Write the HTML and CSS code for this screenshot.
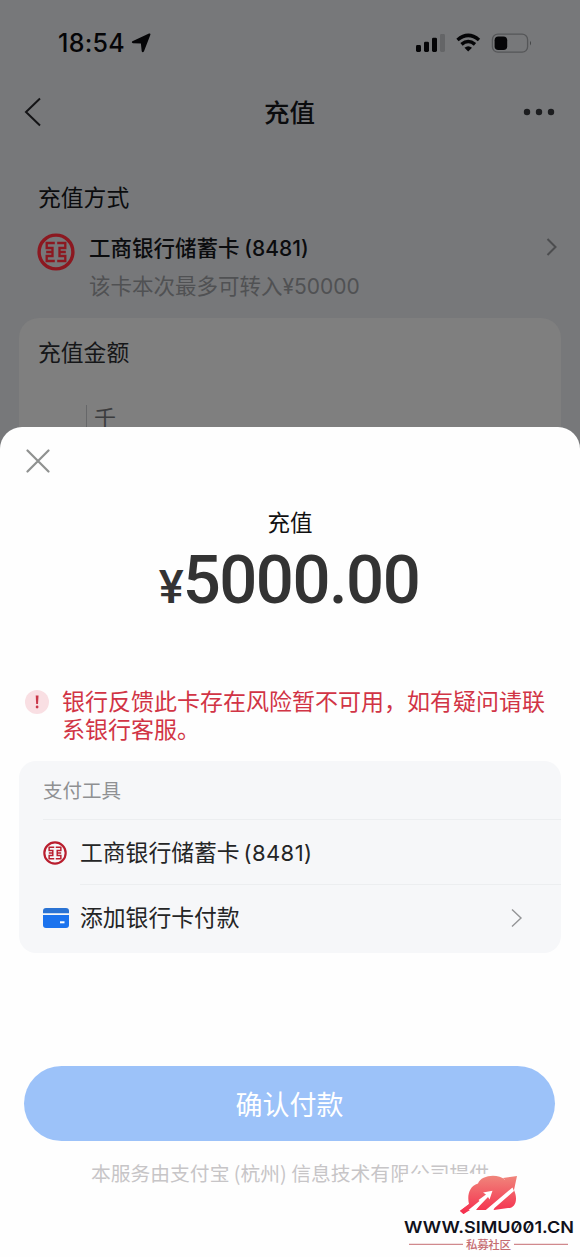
FILE: index.html
```html
<!DOCTYPE html>
<html lang="zh-CN">
<head>
<meta charset="utf-8">
<title>充值</title>
<link rel="stylesheet" href="styles.css">
</head>
<body>
<svg width="0" height="0" class="defs">
  <symbol id="icbc" viewBox="0 0 38 38">
    <circle cx="19" cy="19" r="16.9" fill="none" stroke="currentColor" stroke-width="3.4"/>
    <path d="M17.800 10H9.700V15H15.500V19H9.200M17.800 28H9.700V23H15.500V19M20.200 10H28.300V15H22.500V19H28.800M20.200 28H28.300V23H22.500V19" fill="none" stroke="currentColor" stroke-width="2.300"/>
  </symbol>
</svg>
<div class="screen">
  <div class="page">
    <div class="status">
      <span class="time">18:54</span>
      <svg class="loc" width="20" height="20" viewBox="0 0 20 20"><path d="M1.400 8.200 18 .6q1.900-.6 1.300 1.300L13 18.300q-1.300 2-2.300 0L9.900 10.600 2 10.300q-2-.8-.6-2.100z"/></svg>
      <svg class="sig" width="116" height="20" viewBox="0 0 116 20">
        <rect x="0" y="12" width="5" height="7" rx="1.4"/><rect x="8" y="8.7" width="5" height="10.3" rx="1.4"/><rect x="16" y="4.7" width="5" height="14.3" rx="1.4"/><rect x="24" y="1" width="5" height="18" rx="1.4" fill="#646567"/>
        <path d="M41.500 7Q52.200 -2.200 63 7M45.500 11.300Q52.200 5.600 59 11.300" fill="none" stroke="#050507" stroke-width="3.500"/>
        <path d="M48.500 14.700Q52.200 11.700 56 14.700L52.200 18.500z"/>
        <rect x="76.400" y="1.200" width="35.200" height="18" rx="5.500" fill="none" stroke="#555658" stroke-width="1.300"/><rect x="78.600" y="3.400" width="12.600" height="13.600" rx="3.800"/><path d="M114 7.800q2 2.200 0 4.800z" fill="#414244"/>
      </svg>
    </div>
    <div class="nav">
      <svg width="18" height="30" viewBox="0 0 18 30"><path d="M16 1.500 2 15 16 28.500" fill="none" stroke="#141416" stroke-width="2"/></svg>
      <h1>充值</h1>
      <svg width="32" height="8" viewBox="0 0 32 8"><g fill="#1c1d1f"><circle cx="4" cy="4" r="3.200"/><circle cx="16" cy="4" r="3.200"/><circle cx="28" cy="4" r="3.200"/></g></svg>
    </div>
    <div class="method">
      <h2>充值方式</h2>
      <div class="bank">
        <svg class="logo" width="38" height="38"><use href="#icbc"/></svg>
        <div class="bank-text"><p class="bank-name">工商银行储蓄卡 <span>(8481)</span></p><p class="limit">该卡本次最多可转入<span>¥50000</span></p></div>
        <svg class="more" width="12" height="18" viewBox="0 0 12 18"><path d="M1.500 1 9.500 9 1.500 17" fill="none" stroke="#4c4d4f" stroke-width="2"/></svg>
      </div>
    </div>
    <div class="amount-card"><h2>充值金额</h2><div class="unit">千</div></div>
  </div>

  <div class="sheet">
    <svg class="close" width="24" height="24" viewBox="0 0 24 24"><path d="M1.500 1.500 22.500 22.500M22.500 1.500 1.500 22.500" stroke="#8f9190" stroke-width="2.200" stroke-linecap="round"/></svg>
    <p class="title">充值</p>
    <p class="sum"><span class="yen">¥</span>5000.00</p>
    <div class="warning"><span class="mark"><svg width="24" height="24" viewBox="0 0 24 24"><path d="M10.700 5.500h2.800l-.5 8.500h-1.800z"/><circle cx="12.100" cy="17" r="1.400"/></svg></span><p>银行反馈此卡存在风险暂不可用，如有疑问请联<br>系银行客服。</p></div>
    <div class="tools">
      <div class="tools-head">支付工具</div>
      <div class="tool"><svg class="red" width="24" height="24"><use href="#icbc"/></svg><p>工商银行储蓄卡<span>(8481)</span></p></div>
      <div class="tool add">
        <svg width="26" height="20" viewBox="0 0 26 20"><path d="M0 5.200V3q0-3 3-3h20q3 0 3 3v2.200z" fill="#2a73d3"/><path d="M0 7h26v10q0 3-3 3H3q-3 0-3-3z" fill="#1b73ee"/><rect x="17" y="13.300" width="4.500" height="2" fill="#fff"/></svg>
        <p>添加银行卡付款</p>
        <svg class="go" width="12" height="20" viewBox="0 0 12 20"><path d="M1 1.500 10 10 1 18.500" fill="none" stroke="#939496" stroke-width="1.400"/></svg>
      </div>
    </div>
    <button class="pay">确认付款</button>
    <p class="provider">本服务由支付宝 (杭州) 信息技术有限公司提供</p>
  </div>

  <div class="watermark">
    <svg width="177" height="83" viewBox="403 1174 177 83">
      <defs><linearGradient id="cloud" gradientUnits="userSpaceOnUse" x1="0" y1="1176" x2="0" y2="1212"><stop offset="0" stop-color="#f0857b"/><stop offset="1" stop-color="#f5314f"/></linearGradient></defs>
      <path d="M469 1204C467 1196 469 1186 478 1183.500C481 1175 498 1173 505 1180L503 1178 517 1176 514 1190C518 1199 516 1208 508 1208L494 1210H476L480 1204 463.500 1214 460 1211z" fill="url(#cloud)"/>
      <path d="M471 1205.500 486 1194.500 483 1192.500 492.500 1190.800 489.500 1199.500 488 1197 475.500 1210H468z" fill="#fff"/>
      <path d="M460 1210.800 477 1198.500 479.500 1201 463.500 1214z" fill="url(#cloud)"/>
      <path d="M485.500 1210.200 512.500 1187.500 514 1191 494.500 1208 493 1211H485z" fill="#fff"/>
      <text x="404" y="1233.200" textLength="170" lengthAdjust="spacingAndGlyphs" class="site">WWW.SIMU<tspan class="slashed">00</tspan>1.CN</text>
      <path d="M409 1244.300H463M514 1244.300H568" stroke="#c56c71"/>
      <text x="466" y="1249" textLength="45" class="community">私募社区</text>
    </svg>
  </div>
</div>
</body>
</html>
```
FILE: styles.css
```css
* { box-sizing: border-box; }
body { margin: 0; font-family: "Noto Sans CJK SC", sans-serif; }
h1, h2, p { margin: 0; font-weight: 400; }
.defs { display: block; position: absolute; }
.screen { position: relative; width: 580px; height: 1257px; overflow: hidden; background: #77787a; }
.page { height: 460px; overflow: hidden; color: #0b0c0e; }
.status { display: flex; align-items: center; height: 86px; padding: 0 48px 0 58px; fill: #050507; }
.time { font: 500 25px/28px Inter, sans-serif; letter-spacing: .3px; width: 73px; color: #050507; }
.sig { margin-left: auto; }
.nav { display: flex; align-items: center; justify-content: space-between; height: 52px; padding: 0 25px 0 24px; }
.nav h1 { font-size: 25.500px; font-weight: 500; line-height: 48px; margin: -2px 0 0 14px; }
.method { padding: 42px 22px 0 38px; height: 180px; }
h2 { font-size: 22.800px; line-height: 34px; }
.bank { display: flex; margin-top: 18px; }
.logo { color: #8c1820; margin: 1px 0 0 -1px; }
.bank-text { margin-left: 14px; }
.bank-name { font-size: 21.500px; line-height: 32px; font-weight: 500; margin-top: -1px; }
.bank-name span { font: 500 21px/30px Inter, sans-serif; }
.limit { font-size: 21.500px; line-height: 32px; margin-top: 5px; color: #505153; }
.limit span { font: 400 21px/30px Inter, sans-serif; }
.more { margin: 6px 0 0 auto; }
.amount-card { margin: 0 19px; height: 160px; background: #7f7f7f; border-radius: 20px; padding: 17px 19px; }
.amount-card h2 { color: #161719; }
.unit { width: max-content; margin: 36px 0 0 48px; padding-left: 7px; font-size: 22px; line-height: 22px; border-left: 1px solid #666769; color: #3b3c3e; }
.sheet { position: absolute; inset: 427px 0 0; background: #fefefe; border-radius: 22px 22px 0 0; padding: 22px 19px 0; }
.close { display: block; margin-left: 7px; }
.title { font-size: 22.500px; line-height: 34px; text-align: center; margin-top: 31px; color: #111; }
.sum { font: 500 67px/76px Roboto, sans-serif; letter-spacing: -1.500px; color: #333; text-align: center; margin-top: 4px; padding-right: 2px; }
.yen { font-size: 47px; letter-spacing: 0; margin-right: -1px; }
.warning { display: flex; gap: 13px; margin: 62px 0 0 6px; color: #d13445; font-size: 23px; line-height: 28px; white-space: nowrap; }
.warning p { margin-top: -1px; height: 57px; }
.mark { width: 24px; height: 24px; border-radius: 50%; background: #f9dfe3; fill: #c9384a; margin-top: 3px; }
.mark svg { display: block; }
.tools { height: 192px; margin-top: 18px; background: #f6f7f9; border-radius: 17px; padding-left: 24px; color: #242526; }
.tools-head { height: 59px; line-height: 58px; font-size: 19.500px; color: #8f9092; border-bottom: 1px solid #eceef0; }
.tool { display: flex; align-items: center; height: 65px; font-size: 22.800px; }
.tool p { margin-left: 13px; flex: 1; height: 65px; line-height: 64px; border-bottom: 1px solid #eceef0; }
.tool span { font-family: Inter, sans-serif; font-size: 22px; margin-left: 4px; letter-spacing: .4px; }
.tool.add p { border: 0; margin-left: 11px; }
.red { color: #b91e2e; }
.go { margin-right: 38px; }
.pay { display: block; width: 531px; height: 75px; margin: 113px 0 0 5px; border: 0; border-radius: 38px; background: #9cc2f9; color: #fff; font: 400 27px/75px "Noto Sans CJK SC", sans-serif; padding: 0; }
.provider { font-size: 19.800px; line-height: 30px; margin-top: 17px; text-align: center; color: #c7c5c7; white-space: nowrap; }
.watermark { position: absolute; right: 0; bottom: 0; width: 177px; height: 83px; background: #fefefe; }
.watermark svg { display: block; }
.site { font: 600 16.500px Inter, sans-serif; fill: #10111b; }
.slashed { font-feature-settings: "zero"; }
.community { font: 500 11.500px "Noto Sans CJK SC", sans-serif; fill: #c56c71; }
```
